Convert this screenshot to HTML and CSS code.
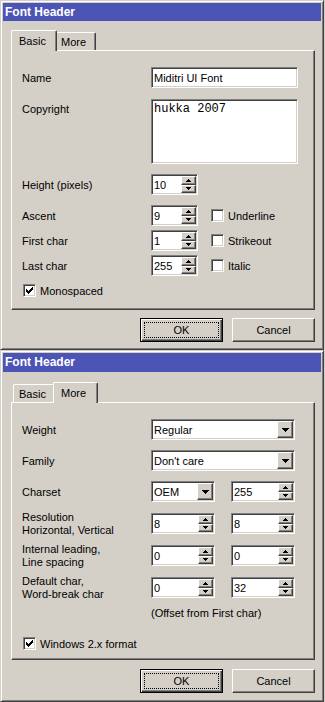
FILE: index.html
```html
<!DOCTYPE html>
<html lang="en">
<head>
<meta charset="UTF-8">
<meta name="viewport" content="width=device-width, initial-scale=1.0">
<title>Font Header</title>
<link rel="stylesheet" href="styles.css">
</head>
<body>

<!-- Basic tab -->
<div class="window">
  <div class="titlebar">Font Header</div>
  <div class="tabs">
    <div class="tab tab-basic active">Basic</div>
    <div class="tab tab-more">More</div>
  </div>
  <div class="panel">
    <div class="row">
      <span class="label">Name</span>
      <div class="field text-field">Miditri UI Font</div>
    </div>
    <div class="row row-top mt11">
      <span class="label label-memo">Copyright</span>
      <div class="field memo">hukka 2007</div>
    </div>
    <div class="row mt10">
      <span class="label">Height (pixels)</span>
      <div class="field spin spin-small"><span class="value">10</span>
        <div class="spin-buttons">
          <div class="spin-btn"><svg width="5" height="3"><path d="M2 0h1v1h1v1h1v1H0V2h1V1h1z"/></svg></div>
          <div class="spin-btn"><svg width="5" height="3"><path d="M0 0h5v1H4v1H3v1H2V2H1V1H0z"/></svg></div>
        </div>
      </div>
    </div>
    <div class="row mt10">
      <span class="label">Ascent</span>
      <div class="field spin spin-small"><span class="value">9</span>
        <div class="spin-buttons">
          <div class="spin-btn"><svg width="5" height="3"><path d="M2 0h1v1h1v1h1v1H0V2h1V1h1z"/></svg></div>
          <div class="spin-btn"><svg width="5" height="3"><path d="M0 0h5v1H4v1H3v1H2V2H1V1H0z"/></svg></div>
        </div>
      </div>
      <div class="check side-check"><span class="box"></span>Underline</div>
    </div>
    <div class="row mt4">
      <span class="label">First char</span>
      <div class="field spin spin-small"><span class="value">1</span>
        <div class="spin-buttons">
          <div class="spin-btn"><svg width="5" height="3"><path d="M2 0h1v1h1v1h1v1H0V2h1V1h1z"/></svg></div>
          <div class="spin-btn"><svg width="5" height="3"><path d="M0 0h5v1H4v1H3v1H2V2H1V1H0z"/></svg></div>
        </div>
      </div>
      <div class="check side-check"><span class="box"></span>Strikeout</div>
    </div>
    <div class="row mt4">
      <span class="label">Last char</span>
      <div class="field spin spin-small"><span class="value">255</span>
        <div class="spin-buttons">
          <div class="spin-btn"><svg width="5" height="3"><path d="M2 0h1v1h1v1h1v1H0V2h1V1h1z"/></svg></div>
          <div class="spin-btn"><svg width="5" height="3"><path d="M0 0h5v1H4v1H3v1H2V2H1V1H0z"/></svg></div>
        </div>
      </div>
      <div class="check side-check"><span class="box"></span>Italic</div>
    </div>
    <div class="check check-row mt8">
      <span class="box"><svg width="7" height="7"><path d="M6 0h1v1H6zM5 1h2v1H5zM0 2h1v1H0zM4 2h3v1H4zM0 3h2v1H0zM3 3h3v1H3zM0 4h5v1H0zM1 5h3v1H1zM2 6h1v1H2z"/></svg></span>Monospaced
    </div>
  </div>
  <div class="buttons">
    <button class="btn btn-default"><span class="focus">OK</span></button>
    <button class="btn">Cancel</button>
  </div>
</div>

<!-- More tab -->
<div class="window window-more">
  <div class="titlebar">Font Header</div>
  <div class="tabs">
    <div class="tab tab-basic">Basic</div>
    <div class="tab tab-more active">More</div>
  </div>
  <div class="panel">
    <div class="row">
      <span class="label">Weight</span>
      <div class="field combo combo-wide"><span class="value">Regular</span>
        <div class="drop-btn"><svg width="7" height="4"><path d="M0 0h7v1H6v1H5v1H4v1H3V3H2V2H1V1H0z"/></svg></div>
      </div>
    </div>
    <div class="row mt10">
      <span class="label">Family</span>
      <div class="field combo combo-wide"><span class="value">Don't care</span>
        <div class="drop-btn"><svg width="7" height="4"><path d="M0 0h7v1H6v1H5v1H4v1H3V3H2V2H1V1H0z"/></svg></div>
      </div>
    </div>
    <div class="row mt10">
      <span class="label">Charset</span>
      <div class="pair">
        <div class="field combo combo-small"><span class="value">OEM</span>
          <div class="drop-btn"><svg width="7" height="4"><path d="M0 0h7v1H6v1H5v1H4v1H3V3H2V2H1V1H0z"/></svg></div>
        </div>
        <div class="field spin spin-wide"><span class="value">255</span>
          <div class="spin-buttons">
            <div class="spin-btn"><svg width="5" height="3"><path d="M2 0h1v1h1v1h1v1H0V2h1V1h1z"/></svg></div>
            <div class="spin-btn"><svg width="5" height="3"><path d="M0 0h5v1H4v1H3v1H2V2H1V1H0z"/></svg></div>
          </div>
        </div>
      </div>
    </div>
    <div class="row row-fixed mt11">
      <span class="label label-two">Resolution<br>Horizontal, Vertical</span>
      <div class="pair">
        <div class="field spin spin-wide"><span class="value">8</span>
          <div class="spin-buttons">
            <div class="spin-btn"><svg width="5" height="3"><path d="M2 0h1v1h1v1h1v1H0V2h1V1h1z"/></svg></div>
            <div class="spin-btn"><svg width="5" height="3"><path d="M0 0h5v1H4v1H3v1H2V2H1V1H0z"/></svg></div>
          </div>
        </div>
        <div class="field spin spin-wide"><span class="value">8</span>
          <div class="spin-buttons">
            <div class="spin-btn"><svg width="5" height="3"><path d="M2 0h1v1h1v1h1v1H0V2h1V1h1z"/></svg></div>
            <div class="spin-btn"><svg width="5" height="3"><path d="M0 0h5v1H4v1H3v1H2V2H1V1H0z"/></svg></div>
          </div>
        </div>
      </div>
    </div>
    <div class="row row-fixed mt11">
      <span class="label label-two">Internal leading,<br>Line spacing</span>
      <div class="pair">
        <div class="field spin spin-wide"><span class="value">0</span>
          <div class="spin-buttons">
            <div class="spin-btn"><svg width="5" height="3"><path d="M2 0h1v1h1v1h1v1H0V2h1V1h1z"/></svg></div>
            <div class="spin-btn"><svg width="5" height="3"><path d="M0 0h5v1H4v1H3v1H2V2H1V1H0z"/></svg></div>
          </div>
        </div>
        <div class="field spin spin-wide"><span class="value">0</span>
          <div class="spin-buttons">
            <div class="spin-btn"><svg width="5" height="3"><path d="M2 0h1v1h1v1h1v1H0V2h1V1h1z"/></svg></div>
            <div class="spin-btn"><svg width="5" height="3"><path d="M0 0h5v1H4v1H3v1H2V2H1V1H0z"/></svg></div>
          </div>
        </div>
      </div>
    </div>
    <div class="row row-fixed mt11">
      <span class="label label-two">Default char,<br>Word-break char</span>
      <div class="pair">
        <div class="field spin spin-wide"><span class="value">0</span>
          <div class="spin-buttons">
            <div class="spin-btn"><svg width="5" height="3"><path d="M2 0h1v1h1v1h1v1H0V2h1V1h1z"/></svg></div>
            <div class="spin-btn"><svg width="5" height="3"><path d="M0 0h5v1H4v1H3v1H2V2H1V1H0z"/></svg></div>
          </div>
        </div>
        <div class="field spin spin-wide"><span class="value">32</span>
          <div class="spin-buttons">
            <div class="spin-btn"><svg width="5" height="3"><path d="M2 0h1v1h1v1h1v1H0V2h1V1h1z"/></svg></div>
            <div class="spin-btn"><svg width="5" height="3"><path d="M0 0h5v1H4v1H3v1H2V2H1V1H0z"/></svg></div>
          </div>
        </div>
      </div>
    </div>
    <div class="note">(Offset from First char)</div>
    <div class="check check-row mt17">
      <span class="box"><svg width="7" height="7"><path d="M6 0h1v1H6zM5 1h2v1H5zM0 2h1v1H0zM4 2h3v1H4zM0 3h2v1H0zM3 3h3v1H3zM0 4h5v1H0zM1 5h3v1H1zM2 6h1v1H2z"/></svg></span>Windows 2.x format
    </div>
  </div>
  <div class="buttons">
    <button class="btn btn-default"><span class="focus">OK</span></button>
    <button class="btn">Cancel</button>
  </div>
</div>

</body>
</html>
```

FILE: styles.css
```css
body {
  margin: 0;
  background-color: #d4d0c8;
  font-family: "Liberation Sans", Arial, sans-serif;
  font-size: 11px;
  color: #000;
}

/* window frame */
.window {
  box-sizing: border-box;
  width: 324px;
  height: 350px;
  padding: 2px;
  border: 1px solid;
  border-color: #d4d0c8 #404040 #404040 #d4d0c8;
  box-shadow: inset 1px 1px #fff, inset -1px -1px #808080;
  display: flex;
  flex-direction: column;
}

.window-more {
  height: 352px;
}

.titlebar {
  height: 18px;
  line-height: 18px;
  padding-left: 2px;
  background-color: #4c55b6;
  color: #fff;
  font-weight: bold;
  font-size: 12px;
}

.window-more .titlebar {
  height: 19px;
  line-height: 19px;
}

/* tabs */
.tabs {
  display: flex;
  align-items: flex-end;
  height: 20px;
  margin-top: 9px;
  padding-left: 10px;
}

.window-more .tabs {
  margin-top: 10px;
}

.tab {
  box-sizing: border-box;
  height: 18px;
  padding: 2px 0 0 5px;
  line-height: 14px;
  border: 1px solid;
  border-bottom: none;
  border-color: #fff #404040 #fff #fff;
  border-radius: 2px 2px 0 0;
  box-shadow: inset -1px 0 #808080;
  background-color: #d4d0c8;
}

.tab-basic {
  width: 42px;
}

.tab-more {
  width: 41px;
}

.tab.active {
  position: relative;
  z-index: 1;
  height: 21px;
  margin: 0 -2px -1px;
  padding: 3px 0 0 7px;
}

.tab-basic.active {
  width: 46px;
}

.tab-more.active {
  width: 45px;
}

/* tab panel */
.panel {
  box-sizing: border-box;
  width: 304px;
  height: 260px;
  margin-left: 8px;
  padding: 16px 10px 0 10px;
  border: 1px solid;
  border-color: #fff #404040 #404040 #fff;
  box-shadow: inset -1px -1px #808080;
}

.window-more .panel {
  height: 258px;
}

.row {
  display: flex;
  align-items: center;
}

.row-top {
  align-items: flex-start;
}

.row-fixed {
  height: 21px;
}

.label {
  flex: none;
  width: 129px;
}

.label-memo {
  padding-top: 3px;
  line-height: 14px;
}

.label-two {
  line-height: 13px;
}

.mt4 { margin-top: 4px; }
.mt8 { margin-top: 8px; }
.mt10 { margin-top: 10px; }
.mt11 { margin-top: 11px; }
.mt17 { margin-top: 17px; }

/* sunken fields */
.field {
  box-sizing: border-box;
  height: 21px;
  display: flex;
  align-items: center;
  padding-left: 2px;
  border: 1px solid;
  border-color: #808080 #fff #fff #808080;
  box-shadow: inset 1px 1px #404040, inset -1px -1px #d4d0c8;
  background-color: #fff;
}

.text-field {
  width: 147px;
}

.memo {
  width: 147px;
  height: 65px;
  align-items: flex-start;
  padding-top: 2px;
  line-height: 14px;
  font-family: "Liberation Mono", "Courier New", monospace;
  font-size: 12px;
}

.value {
  flex: 1;
}

.spin-small {
  width: 47px;
}

.spin-wide {
  width: 64px;
}

.spin-buttons {
  align-self: stretch;
  display: flex;
  flex-direction: column;
  width: 15px;
  margin: 1px;
}

.spin-btn,
.drop-btn {
  flex: 1;
  display: flex;
  align-items: center;
  justify-content: center;
  box-sizing: border-box;
  border: 1px solid;
  border-color: #fff #404040 #404040 #fff;
  box-shadow: inset -1px -1px #808080;
  background-color: #d4d0c8;
}

.spin-btn svg,
.drop-btn svg {
  display: block;
}

.combo-wide {
  width: 144px;
}

.combo-small {
  width: 64px;
}

.drop-btn {
  flex: none;
  align-self: stretch;
  width: 16px;
  margin: 1px;
}

.pair {
  display: flex;
  gap: 16px;
}

.note {
  margin: 8px 0 0 129px;
  line-height: 14px;
}

/* checkboxes */
.check {
  display: flex;
  align-items: center;
  gap: 4px;
}

.side-check {
  margin-left: 13px;
}

.check-row {
  padding-left: 1px;
}

.box {
  box-sizing: border-box;
  flex: none;
  width: 13px;
  height: 13px;
  display: flex;
  align-items: center;
  justify-content: center;
  border: 1px solid;
  border-color: #808080 #fff #fff #808080;
  box-shadow: inset 1px 1px #404040, inset -1px -1px #d4d0c8;
  background-color: #fff;
}

.box svg {
  display: block;
}

/* dialog buttons */
.buttons {
  display: flex;
  justify-content: flex-end;
  gap: 9px;
  margin-top: 8px;
  padding-right: 6px;
}

.window-more .buttons {
  margin-top: 9px;
}

.btn {
  box-sizing: border-box;
  width: 83px;
  height: 24px;
  padding: 0;
  display: flex;
  align-items: center;
  justify-content: center;
  border: 1px solid;
  border-color: #fff #404040 #404040 #fff;
  box-shadow: inset -1px -1px #808080;
  background-color: #d4d0c8;
  font-family: "Liberation Sans", Arial, sans-serif;
  font-size: 11px;
  color: #000;
}

.btn-default {
  padding: 3px;
  border-color: #000;
  box-shadow: inset 1px 1px #fff, inset -1px -1px #404040, inset -2px -2px #808080;
}

.focus {
  flex: 1;
  align-self: stretch;
  display: flex;
  align-items: center;
  justify-content: center;
  border: 1px dotted #000;
}
```
